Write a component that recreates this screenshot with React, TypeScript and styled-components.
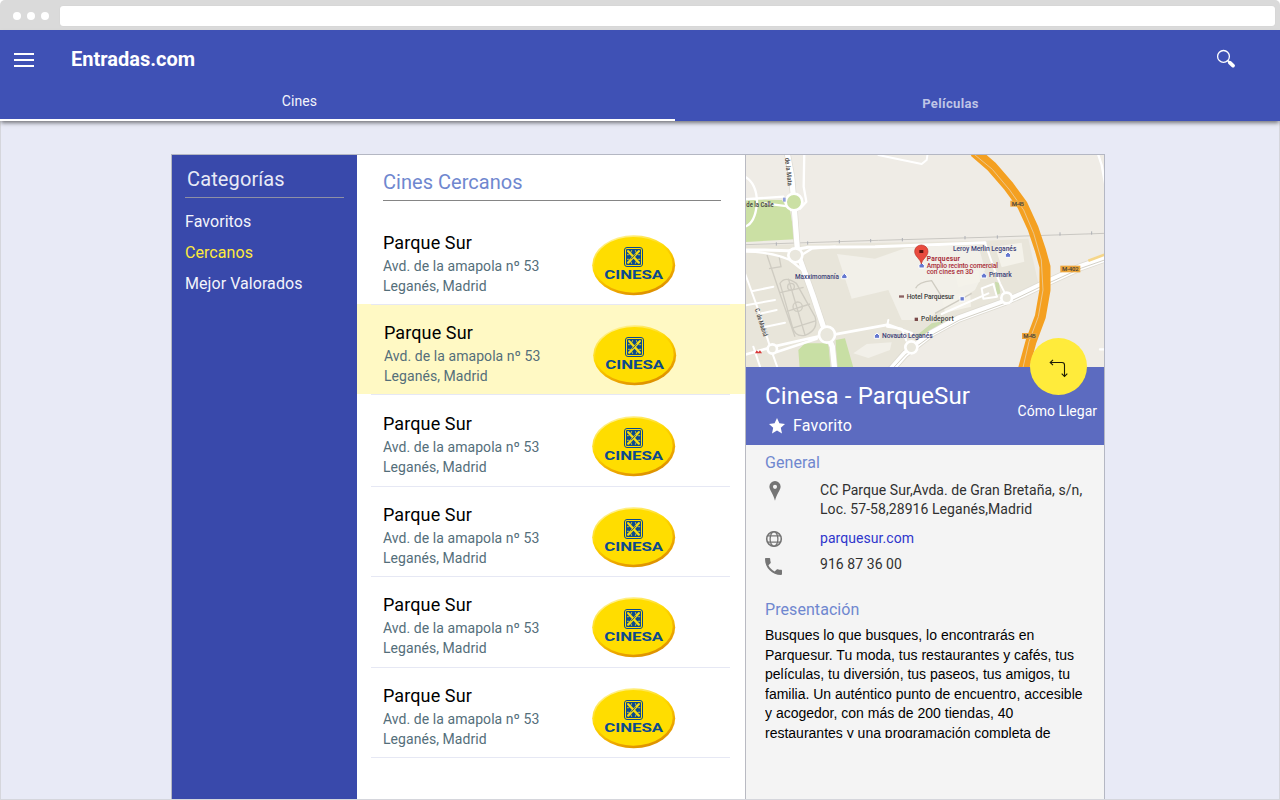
import React from "react";
import styled, { createGlobalStyle } from "styled-components";

const Global = createGlobalStyle`
  * { box-sizing: border-box; }
  body { margin: 0; background: #fff; font-family: Roboto, "Liberation Sans", sans-serif; overflow: hidden; }
  h1, h2, h3, p, ul { margin: 0; padding: 0; font-weight: 400; list-style: none; }
`;

const Window = styled.div`
  width: 1280px;
  height: 800px;
  overflow: hidden;
  display: flex;
  flex-direction: column;
`;

const ChromeBar = styled.div`
  flex: none;
  height: 30px;
  background: #dadada;
  border-radius: 5px 5px 0 0;
  display: flex;
  align-items: center;
  padding: 1px 5px 0 12.5px;
`;

const Dots = styled.div`
  display: flex;
  gap: 6px;
  width: 47px;
`;

const Dot = styled.span`
  width: 8px;
  height: 8px;
  border-radius: 50%;
  background: #fff;
`;

const AddressField = styled.div`
  flex: 1;
  height: 20px;
  border-radius: 3px;
  background: #fff;
  box-shadow: 0 0 1px #c4c4c4;
`;

const Header = styled.header`
  flex: none;
  height: 91px;
  background: #3f51b5;
  color: #fff;
  display: flex;
  flex-direction: column;
  justify-content: space-between;
  position: relative;
  box-shadow: 0 3px 4px -1px rgba(0, 0, 0, 0.5);
`;

const TitleBar = styled.div`
  display: flex;
  align-items: center;
  height: 58px;
  padding: 0 44px 0 14px;
`;

const MenuButton = styled.div`
  width: 57px;
  padding-top: 2px;
  display: flex;
  flex-direction: column;
  gap: 4px;
`;

const MenuLine = styled.span`
  width: 20px;
  height: 2px;
  background: #fff;
`;

const Brand = styled.h1`
  flex: 1;
  font-size: 20px;
  line-height: 24px;
  font-weight: 700;
`;

const Tabs = styled.nav`
  display: flex;
  height: 33px;
`;

const Tab = styled.div<{ $active?: boolean }>`
  width: ${(p) => (p.$active ? 675 : 605)}px;
  padding: ${(p) => (p.$active ? "5px 76px 0 0" : "8px 54px 0 0")};
  border-bottom: 2px solid ${(p) => (p.$active ? "#fff" : "transparent")};
  text-align: center;
  font-size: ${(p) => (p.$active ? 14 : 13)}px;
  line-height: 16px;
  letter-spacing: ${(p) => (p.$active ? 0.1 : 0.35)}px;
  font-weight: ${(p) => (p.$active ? 400 : 700)};
  color: ${(p) => (p.$active ? "#f4f5fb" : "#bfc5e6")};
`;

const Body = styled.main`
  flex: 1;
  background: #e8eaf6;
  border: 1px solid #d5d6dc;
  border-top: 0;
  padding: 33px 0 0 170px;
`;

const Panel = styled.div`
  display: flex;
  width: 934px;
  height: 645px;
  border: 1px solid #b4b7c3;
  border-bottom: 0;
`;

const Sidebar = styled.aside`
  flex: none;
  width: 185px;
  background: #3949ab;
  padding: 12px 13px;
  color: #f3f4fb;
`;

const SidebarTitle = styled.h2`
  font-size: 20px;
  line-height: 24px;
  letter-spacing: 0.12px;
  padding: 0 0 6px 2px;
  color: #e8eaf6;
  border-bottom: 1px solid #8e90a5;
`;

const Categories = styled.ul`
  padding-top: 8px;
`;

const Category = styled.li<{ $active?: boolean }>`
  font-size: 16px;
  line-height: 31px;
  letter-spacing: 0.06px;
  color: ${(p) => (p.$active ? "#ffeb3b" : "#f3f4fb")};
`;

const ListColumn = styled.section`
  flex: none;
  width: 388px;
  background: #fff;
`;

const ListTitle = styled.h2`
  margin: 0 24px 13px 26px;
  padding: 15px 0 6px;
  font-size: 20px;
  line-height: 24px;
  letter-spacing: 0.03px;
  color: #6f87cf;
  border-bottom: 1px solid #858585;
`;

const CinemaRow = styled.article<{ $height: number; $selected?: boolean }>`
  height: ${(p) => p.$height}px;
  padding: 0 69px 0 ${(p) => (p.$selected ? 27 : 26)}px;
  display: flex;
  justify-content: space-between;
  background: ${(p) => (p.$selected ? "#fff9c4" : "transparent")};
  position: relative;
  &::after {
    content: "";
    position: absolute;
    left: 14px;
    right: 15px;
    bottom: -1px;
    height: 1px;
    background: #e6e8f4;
    z-index: 1;
  }
`;

const CinemaText = styled.div`
  padding-top: 18px;
  color: #546e7a;
  font-size: 14px;
  line-height: 20px;
  letter-spacing: 0.06px;
`;

const CinemaName = styled.h3`
  font-size: 18px;
  line-height: 22px;
  letter-spacing: 0.1px;
  padding-bottom: 2px;
  color: #000;
`;

const LogoBox = styled.div<{ $selected?: boolean }>`
  padding-top: 21px;
  margin-right: ${(p) => (p.$selected ? -1 : 0)}px;
  svg { display: block; }
`;

const Detail = styled.section`
  flex: none;
  width: 359px;
  background: #f4f4f4;
  border-left: 1px solid #b9bac2;
  display: flex;
  flex-direction: column;
`;

const MapBox = styled.div`
  height: 212px;
  svg { display: block; }
`;

const Banner = styled.div`
  height: 78px;
  background: #5c6bc0;
  color: #fff;
  padding: 14px 7px 0 19px;
  display: flex;
  justify-content: space-between;
  position: relative;
`;

const BannerTitle = styled.h2`
  font-size: 24px;
  line-height: 30px;
  letter-spacing: 0.14px;
`;

const Favourite = styled.div`
  display: flex;
  align-items: center;
  gap: 8px;
  padding-left: 4px;
  margin-top: 5px;
  font-size: 16px;
  line-height: 20px;
  letter-spacing: 0.2px;
`;

const DirectionsLabel = styled.span`
  padding-top: 22px;
  font-size: 14px;
  line-height: 16px;
`;

const DirectionsButton = styled.div`
  position: absolute;
  right: 17px;
  top: -29px;
  width: 57px;
  height: 57px;
  border-radius: 50%;
  background: #ffeb3b;
  display: flex;
  align-items: center;
  justify-content: center;
  padding-top: 2px;
`;

const Info = styled.div`
  padding: 8px 14px 0 19px;
`;

const SectionTitle = styled.h3`
  font-size: 16px;
  line-height: 20px;
  letter-spacing: 0.07px;
  color: #6f87cf;
`;

const InfoRow = styled.div<{ $top: number; $link?: boolean }>`
  display: flex;
  margin-top: ${(p) => p.$top}px;
  font-size: 14px;
  line-height: 19px;
  letter-spacing: 0.06px;
  color: ${(p) => (p.$link ? "#2f36cc" : "#303030")};
  white-space: pre;
`;

const InfoIcon = styled.div<{ $drop?: number }>`
  width: 55px;
  height: 19px;
  padding-top: ${(p) => p.$drop ?? 0}px;
  svg { display: block; }
`;

const Presentation = styled.div`
  padding: 26px 14px 0 19px;
`;

const PresentationText = styled.p`
  margin-top: 6px;
  height: 112px;
  overflow: hidden;
  font-family: "Liberation Sans", Arial, sans-serif;
  font-size: 14px;
  line-height: 19.5px;
  color: #000;
  white-space: pre;
`;

const CinesaLogo = () => (
  <svg width="84" height="61" viewBox="0 0 84 61">
    <defs>
      <linearGradient id="rim" x1="0.25" y1="0" x2="0.75" y2="1">
        <stop offset="0" stopColor="#fff3a0" />
        <stop offset="0.4" stopColor="#ffd900" />
        <stop offset="0.75" stopColor="#eda600" />
        <stop offset="1" stopColor="#d98c00" />
      </linearGradient>
    </defs>
    <ellipse cx="41.7" cy="30.2" rx="41.5" ry="30" fill="url(#rim)" />
    <ellipse cx="41.4" cy="29.8" rx="39.3" ry="27.9" fill="#ffdd00" />
    <rect x="32.5" y="12.5" width="18" height="19" rx="2.5" fill="#ffdd00" stroke="#0b4a8f" />
    <rect x="34" y="14" width="15" height="16" rx="1" fill="#0b4a8f" />
    <g stroke="#f7dc10" fill="none" strokeLinecap="round">
      <path d="M36.2 27.6 L46.8 16.2 M36.2 16.2 L46.8 27.6" strokeWidth="2.3" />
      <path
        d="M35.4 19.8 Q37.8 20.6 39.6 15.6 M43.4 15.6 Q45 20.6 47.8 19.8 M35.4 24.2 Q37.8 23.4 39.6 28.4 M43.4 28.4 Q45 23.4 47.8 24.2"
        strokeWidth="0.9"
      />
    </g>
    <path d="M39 24.2 L43.8 19" stroke="#0b4a8f" strokeWidth="0.8" />
    <text
      x="12.2"
      y="43.8"
      textLength="59"
      lengthAdjust="spacingAndGlyphs"
      fontFamily="Roboto, sans-serif"
      fontWeight="700"
      fontSize="12.6"
      fill="#0b4a8f"
    >
      CINESA
    </text>
  </svg>
);

const roads = {
  avenue: "M125 0 L140 80 L146 150 L158 310 L180 370 L205 440 L235 530 L262 590 L270 670",
  west: "M0 300 L60 300 L130 302 L190 292 L390 290 L560 284 L720 278",
  exit: "M0 614 L85 590 L225 558 M95 606 L215 566 M270 553 L430 524 L500 550",
  south: "M420 680 L480 612 L560 550 L640 506 L780 455 L830 434 L900 400 L1010 350 L1090 322",
};

const AreaMap = () => (
  <svg width="358" height="212" viewBox="0 0 358 212">
    <rect width="358" height="212" fill="#efece6" />
    <g transform="scale(0.33333) translate(-3 -15)">
      <path d="M0 286 L720 272 L850 266 L880 400 L760 450 L560 540 L430 670 L0 670Z" fill="#e8e5da" />
      <path d="M0 148 L110 150 L135 180 L150 268 L0 276Z" fill="#cbe0a4" />
      <path d="M160 600 L180 580 L250 580 L258 670 L165 670Z M272 570 L300 565 L330 670 L276 670Z" fill="#c8dfa4" />
      <path d="M276 312 L390 326 L480 295 L580 288 L700 286 L720 360 L690 420 L540 510 L470 510 L430 420 L320 446Z" fill="#f2f0e9" />
      <path d="M325 610 L365 582 L440 577 L435 600 L370 624Z" fill="#f2f0e9" />
      <path d="M750 290 L830 278 L838 335 L770 352Z M630 370 L700 362 L705 395 L640 412Z M590 440 L675 425 L678 470 L600 488Z" fill="#f4f2ea" />
      <path d="M750 395 L762 398 L766 430 L754 436Z M510 560 L560 520 L600 512 L540 560Z" fill="#cbdcae" />

      <g fill="none" stroke="#cfccc2" strokeWidth="4">
        <path d="M66 315 L108 440 L150 560 M72 356 L108 350 L102 318 M105 400 Q120 376 154 400 L210 500 Q222 540 180 556 Q150 562 142 530 Z M104 428 L176 412 M126 484 L195 462 M140 535 L214 512 M130 386 L180 555" />
        <circle cx="158" cy="470" r="14" />
        <circle cx="138" cy="410" r="10" />
        <path d="M512 415 Q520 396 560 392 L590 440 M570 490 L680 430" />
      </g>

      <path d="M0 284 L400 271 L720 262 L1080 250" fill="none" stroke="#c9c7c2" strokeWidth="3" />
      <path d="M94 277 v10 M188 274 v10 M283 270 v10 M377 267 v10 M472 264 v10 M660 258 v10 M757 256 v10 M945 247 v10 M1040 244 v10" stroke="#aeb0b6" strokeWidth="3" />

      <g fill="none" stroke="#dedbd2" strokeLinecap="round">
        <path d={roads.avenue} strokeWidth="20" />
        <path d={roads.south} strokeWidth="24" />
      </g>
      <g fill="none" stroke="#fff" strokeLinecap="round" strokeLinejoin="round">
        <path d={roads.avenue} strokeWidth="16" />
        <path d={roads.south} strokeWidth="19" />
        <path d={roads.west} strokeWidth="9" />
        <path d={roads.exit} strokeWidth="8" />
        <path d="M178 0 L176 110 L184 155 L165 176 M0 148 L115 140 M0 80 Q36 100 36 160 Q30 220 0 230 M60 160 L135 170" strokeWidth="7" />
        <path d="M0 305 Q80 305 135 330 L185 370 M170 315 L200 296 L270 290" strokeWidth="7" />
        <path d="M0 370 L40 480 L75 590 L100 660 M20 424 L85 410 M0 466 L90 450 M50 490 L95 480 M55 532 L120 518 M25 590 L45 650" strokeWidth="6" />
        <path d="M400 15 L530 42 L545 30 L548 10 M720 278 L745 350 L765 400 L780 430 M710 415 L745 402 L756 440 L715 446 Z M590 492 L730 430 M430 510 L426 530 L470 536 L484 572" strokeWidth="6" />
        <path d="M1055 0 L1070 45 L1080 100 M1065 598 L1090 598" strokeWidth="7" />
      </g>
      <path d="M1030 332 L1090 310" stroke="#f5d68a" strokeWidth="8" />
      <path d="M430 670 L484 612 L566 552 L644 510 L780 460 M800 452 L900 404 L1010 354 L1090 326" fill="none" stroke="#d3d0c6" strokeWidth="3" />
      <g fill="#e9e7dd" stroke="#fff" strokeWidth="8">
        <circle cx="147" cy="156" r="25" fill="#cbe0a4" />
        <circle cx="151" cy="316" r="21" />
        <circle cx="246" cy="554" r="24" />
        <circle cx="785" cy="444" r="16" />
        <circle cx="499" cy="592" r="18" />
        <circle cx="82" cy="597" r="14" />
      </g>

      <g fill="none" strokeLinejoin="round">
        <path d="M688 5 L740 50 L792 110 L832 165 L864 235 L886 300 L900 350 L900 420 L886 500 L858 575 L832 670" stroke="#f4a021" strokeWidth="33" />
        <path d="M684 10 L742 58 L794 120 L836 180 L866 250 L889 330 L894 420 L880 500 L852 575 L830 670" stroke="#ecc78c" strokeWidth="3" />
      </g>
      <g fill="#eda63b">
        <rect x="796" y="152" width="44" height="18" />
        <rect x="946" y="347" width="60" height="20" />
        <rect x="831" y="549" width="46" height="18" />
      </g>

      <g fontFamily="Roboto, sans-serif" fontSize="20" fontWeight="500" fill="#3c3c3c">
        <text x="800" y="168" fontSize="18" textLength="37">M-45</text>
        <text x="951" y="364" fontSize="18" textLength="50">M-402</text>
        <text x="835" y="565" fontSize="18" textLength="37">M-45</text>
        <text x="4" y="171" textLength="82" lengthAdjust="spacingAndGlyphs">de la Calle</text>
        <text transform="translate(120 24) rotate(84)" textLength="84" lengthAdjust="spacingAndGlyphs">de la Mata</text>
        <text transform="translate(29 478) rotate(72)" textLength="86" lengthAdjust="spacingAndGlyphs">C. de Madrid</text>
        <text x="485" y="446" textLength="142">Hotel Parquesur</text>
        <text x="528" y="514" textLength="98">Polideport</text>
        <g fill="#3c3f78">
          <text x="150" y="386" textLength="132" lengthAdjust="spacingAndGlyphs">Maxximomanía</text>
          <text x="411" y="564" textLength="152">Novauto Leganés</text>
          <text x="624" y="302" textLength="190">Leroy Merlin Leganés</text>
          <text x="732" y="382" textLength="68">Primark</text>
        </g>
        <g fill="#a82c38">
          <text x="545" y="334" fontWeight="700" textLength="100">Parquesur</text>
          <text x="545" y="353" textLength="214">Amplio recinto comercial</text>
          <text x="545" y="371" textLength="140">con cines en 3D</text>
        </g>
      </g>
      <g fill="#6578cf" stroke="#fff" strokeWidth="3">
        <path d="M290 386 v-8 l8 -8 8 8 v8z M388 565 v-8 l8 -8 8 8 v8z M781 322 v-8 l8 -8 8 8 v8z M709 384 v-8 l8 -8 8 8 v8z M522 354 v-8 l8 -8 8 8 v8z" />
        <rect x="645" y="440" width="13" height="13" />
      </g>
      <path d="M114 143 h8 v12 h-8z" fill="#8fa0dc" />
      <rect x="462" y="436" width="15" height="7" fill="#8b6262" />
      <rect x="509" y="503" width="10" height="10" fill="#7b4b4b" />
      <path d="M30 610 l5 -9 5 5 5 -5 6 9z" fill="#d83a3a" />
      <path d="M529 342 C526 326 509 320 509 304 A20 19 0 0 1 549 304 C549 320 532 326 529 342Z" fill="#e94b3e" stroke="#b9342b" strokeWidth="2" />
      <rect x="523" y="300" width="12" height="9" fill="#5a1410" />
    </g>
  </svg>
);

const SearchIcon = () => (
  <svg width="20" height="20" viewBox="0 0 20 20" fill="none" stroke="#fff">
    <circle cx="7.5" cy="7.4" r="5.9" strokeWidth="1.3" />
    <path d="M11.6 11.6 L14 13.5" strokeWidth="1.6" />
    <path d="M13.8 13.7 L17 16.6" strokeWidth="3.8" strokeLinecap="round" />
  </svg>
);

const StarIcon = () => (
  <svg width="16" height="16" viewBox="0 0 16 16">
    <path fill="#fff" d="M8 0 L10.4 5.3 L16 5.9 L11.8 9.8 L13 15.6 L8 12.6 L3 15.6 L4.2 9.8 L0 5.9 L5.6 5.3Z" />
  </svg>
);

const DirectionsIcon = () => (
  <svg width="20" height="20" viewBox="0 0 20 20" fill="none" stroke="#1d1b06" strokeWidth="1.1">
    <path d="M1.2 4.5 H13 Q15.5 4.5 15.5 7 V18.2" />
    <path d="M4 1.8 L1.2 4.5 L4 7.2 M12.7 15.6 L15.5 18.4 L18.3 15.6" />
  </svg>
);

const PinIcon = () => (
  <svg width="20" height="20" viewBox="0 0 20 20">
    <path
      fill="#757575"
      fillRule="evenodd"
      d="M10 0 a5.6 5.6 0 0 1 5.6 5.7 C15.6 9 11.8 12.4 10 19.7 C8.2 12.4 4.4 9 4.4 5.7 A5.6 5.6 0 0 1 10 0z M10 3.8 a2 2 0 1 0 0 4.1 a2 2 0 1 0 0 -4.1z"
    />
  </svg>
);

const GlobeIcon = () => (
  <svg width="18" height="18" viewBox="0 0 18 18" fill="none" stroke="#757575" strokeWidth="1.6">
    <circle cx="9" cy="9" r="7.3" />
    <ellipse cx="9" cy="9" rx="3.9" ry="7.3" strokeWidth="1.3" />
    <path d="M2.4 5.9 H15.6 M2.4 12.1 H15.6" strokeWidth="1.4" />
  </svg>
);

const PhoneIcon = () => (
  <svg width="17" height="17" viewBox="3 3 18 18">
    <path
      fill="#757575"
      d="M6.62 10.79c1.44 2.83 3.76 5.14 6.59 6.59l2.2-2.2c.27-.27.67-.36 1.02-.24 1.12.37 2.33.57 3.57.57.55 0 1 .45 1 1V20c0 .55-.45 1-1 1-9.39 0-17-7.61-17-17 0-.55.45-1 1-1h3.5c.55 0 1 .45 1 1 0 1.25.2 2.45.57 3.57.11.35.03.74-.25 1.02l-2.2 2.2z"
    />
  </svg>
);

const cinemas = [
  { height: 90 },
  { height: 90, selected: true },
  { height: 91 },
  { height: 90 },
  { height: 91 },
  { height: 90 },
];

const CinemaList = styled.div`
  & > article:nth-child(2) { margin-bottom: 1px; }
`;

export default function App() {
  return (
    <Window>
      <Global />
      <ChromeBar>
        <Dots>
          <Dot />
          <Dot />
          <Dot />
        </Dots>
        <AddressField />
      </ChromeBar>
      <Header>
        <TitleBar>
          <MenuButton>
            <MenuLine />
            <MenuLine />
            <MenuLine />
          </MenuButton>
          <Brand>Entradas.com</Brand>
          <SearchIcon />
        </TitleBar>
        <Tabs>
          <Tab $active>Cines</Tab>
          <Tab>Películas</Tab>
        </Tabs>
      </Header>
      <Body>
        <Panel>
          <Sidebar>
            <SidebarTitle>Categorías</SidebarTitle>
            <Categories>
              <Category>Favoritos</Category>
              <Category $active>Cercanos</Category>
              <Category>Mejor Valorados</Category>
            </Categories>
          </Sidebar>
          <ListColumn>
            <ListTitle>Cines Cercanos</ListTitle>
            <CinemaList>
              {cinemas.map((c, i) => (
                <CinemaRow key={i} $height={c.height} $selected={c.selected}>
                  <CinemaText>
                    <CinemaName>Parque Sur</CinemaName>
                    <p>Avd. de la amapola nº 53</p>
                    <p>Leganés, Madrid</p>
                  </CinemaText>
                  <LogoBox $selected={c.selected}>
                    <CinesaLogo />
                  </LogoBox>
                </CinemaRow>
              ))}
            </CinemaList>
          </ListColumn>
          <Detail>
            <MapBox>
              <AreaMap />
            </MapBox>
            <Banner>
              <div>
                <BannerTitle>Cinesa - ParqueSur</BannerTitle>
                <Favourite>
                  <StarIcon />
                  Favorito
                </Favourite>
              </div>
              <DirectionsLabel>Cómo Llegar</DirectionsLabel>
              <DirectionsButton>
                <DirectionsIcon />
              </DirectionsButton>
            </Banner>
            <Info>
              <SectionTitle>General</SectionTitle>
              <InfoRow $top={8}>
                <InfoIcon>
                  <PinIcon />
                </InfoIcon>
                <p>{"CC Parque Sur,Avda. de Gran Bretaña, s/n,\nLoc. 57-58,28916 Leganés,Madrid"}</p>
              </InfoRow>
              <InfoRow $top={10} $link>
                <InfoIcon $drop={1}>
                  <GlobeIcon />
                </InfoIcon>
                <p>parquesur.com</p>
              </InfoRow>
              <InfoRow $top={7}>
                <InfoIcon $drop={3}>
                  <PhoneIcon />
                </InfoIcon>
                <p>916 87 36 00</p>
              </InfoRow>
            </Info>
            <Presentation>
              <SectionTitle>Presentación</SectionTitle>
              <PresentationText>
                {"Busques lo que busques, lo encontrarás en\nParquesur. Tu moda, tus restaurantes y cafés, tus\npelículas, tu diversión, tus paseos, tus amigos, tu\nfamilia. Un auténtico punto de encuentro, accesible\ny acogedor, con más de 200 tiendas, 40\nrestaurantes y una programación completa de"}
              </PresentationText>
            </Presentation>
          </Detail>
        </Panel>
      </Body>
    </Window>
  );
}
